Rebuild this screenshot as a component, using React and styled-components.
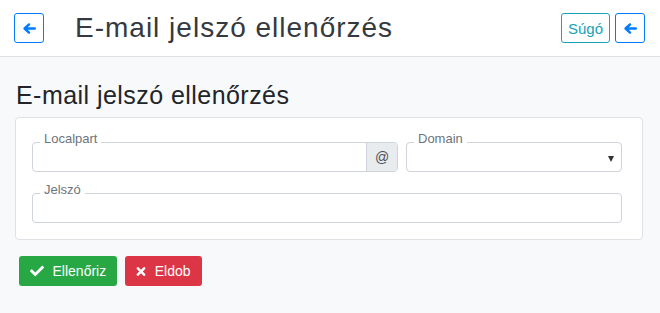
import React from 'react';
import styled, { createGlobalStyle } from 'styled-components';

const GlobalStyle = createGlobalStyle`
  html, body {
    margin: 0;
    padding: 0;
    background: #f8f9fa;
    font-family: "Liberation Sans", Arial, sans-serif;
    color: #212529;
  }
  * { box-sizing: border-box; }
`;

const ArrowLeft = ({ color }) => (
  <svg width="13" height="11" viewBox="0 0 13 11" fill="none" stroke={color} strokeWidth="2.4" strokeLinecap="round" strokeLinejoin="round">
    <path d="M11.8 5.5H2.2M6 1.4L1.6 5.5L6 9.6" />
  </svg>
);

const CheckIcon = () => (
  <svg width="14" height="14" viewBox="0 0 512 512" fill="#fff">
    <path d="M173.9 439.4l-166.4-166.4c-10-10-10-26.2 0-36.2l36.2-36.2c10-10 26.2-10 36.2 0L192 312.7 432.1 72.6c10-10 26.2-10 36.2 0l36.2 36.2c10 10 10 26.2 0 36.2l-294.4 294.4c-10 10-26.2 10-36.2 0z" />
  </svg>
);

const TimesIcon = () => (
  <svg width="10" height="13" viewBox="0 0 352 512" fill="#fff">
    <path d="M242.7 256l100.1-100.1c12.3-12.3 12.3-32.2 0-44.5l-22.2-22.2c-12.3-12.3-32.2-12.3-44.5 0L176 189.3 75.9 89.2c-12.3-12.3-32.2-12.3-44.5 0L9.2 111.5c-12.3 12.3-12.3 32.2 0 44.5L109.3 256 9.2 356.1c-12.3 12.3-12.3 32.2 0 44.5l22.2 22.2c12.3 12.3 32.2 12.3 44.5 0L176 322.7l100.1 100.1c12.3 12.3 32.2 12.3 44.5 0l22.2-22.2c12.3-12.3 12.3-32.2 0-44.5L242.7 256z" />
  </svg>
);

const Header = styled.header`
  height: 57px;
  background: #fff;
  border-bottom: 1px solid #dee2e6;
  display: flex;
  align-items: center;
  padding: 0 15px 0 14px;
`;

const HeaderTitle = styled.h1`
  flex: 1;
  margin: 0 0 0 31px;
  font-size: 28px;
  font-weight: 400;
  letter-spacing: 1px;
  color: #343a40;
`;

const OutlineButton = styled.button`
  height: 30px;
  min-width: 30px;
  padding: 0 ${p => (p.$text ? '6px' : '0')};
  margin-left: ${p => p.$gap || 0}px;
  background: #fff;
  border: 1px solid ${p => p.$color};
  color: ${p => p.$color};
  border-radius: 3px;
  font-family: inherit;
  font-size: 15px;
  display: flex;
  align-items: center;
  justify-content: center;
  cursor: pointer;
`;

const Main = styled.main`
  padding: 0 17px 0 15px;
`;

const PageTitle = styled.h2`
  margin: 0;
  padding: 24px 0 0 1px;
  height: 60px;
  font-size: 25px;
  font-weight: 400;
  letter-spacing: 0.45px;
  color: #212529;
`;

const Card = styled.section`
  background: #fff;
  border: 1px solid #dee2e6;
  border-radius: 4px;
  padding: 24px 20px 16px 16px;
  display: flex;
  flex-direction: column;
  gap: 21px;
`;

const Row = styled.div`
  display: grid;
  grid-template-columns: ${p => p.$cols || '1fr'};
  gap: 8px;
`;

const Field = styled.div`
  position: relative;
  height: 30px;
  border: 1px solid #ced4da;
  border-radius: 4px;
  background: #fff;
  display: flex;
`;

const FloatLabel = styled.label`
  position: absolute;
  top: -11px;
  left: 7px;
  padding: 0 4px;
  background: #fff;
  font-size: 13px;
  line-height: 13px;
  color: #6c757d;
`;

const Input = styled.input`
  flex: 1;
  min-width: 0;
  border: none;
  background: transparent;
  outline: none;
  border-radius: 4px;
  font-family: inherit;
  font-size: 14px;
  padding: 0 10px;
`;

const Addon = styled.span`
  width: 31px;
  background: #e9ecef;
  border-left: 1px solid #ced4da;
  border-radius: 0 3px 3px 0;
  color: #495057;
  font-size: 14px;
  display: flex;
  align-items: center;
  justify-content: center;
`;

const SelectCaret = styled.span`
  position: absolute;
  right: 7px;
  top: 13px;
  width: 0;
  height: 0;
  border-left: 3.5px solid transparent;
  border-right: 3.5px solid transparent;
  border-top: 6px solid #333;
  pointer-events: none;
`;

const Actions = styled.div`
  display: flex;
  gap: 8px;
  padding: 16px 0 0 4px;
`;

const SolidButton = styled.button`
  height: 30px;
  padding: 0 11px;
  border: none;
  border-radius: 3px;
  background: ${p => p.$bg};
  color: #fff;
  font-family: inherit;
  font-size: 14px;
  display: flex;
  align-items: center;
  gap: 8.5px;
  cursor: pointer;
`;

export default function App() {
  return (
    <>
      <GlobalStyle />
      <Header>
        <OutlineButton $color="#007bff" aria-label="Vissza">
          <ArrowLeft color="#007bff" />
        </OutlineButton>
        <HeaderTitle>E-mail jelszó ellenőrzés</HeaderTitle>
        <OutlineButton $color="#17a2b8" $text>Súgó</OutlineButton>
        <OutlineButton $color="#007bff" $gap={5} aria-label="Vissza">
          <ArrowLeft color="#007bff" />
        </OutlineButton>
      </Header>
      <Main>
        <PageTitle>E-mail jelszó ellenőrzés</PageTitle>
        <Card>
          <Row $cols="366fr 216fr">
            <Field>
              <FloatLabel>Localpart</FloatLabel>
              <Input type="text" />
              <Addon>@</Addon>
            </Field>
            <Field>
              <FloatLabel>Domain</FloatLabel>
              <Input as="div" />
              <SelectCaret />
            </Field>
          </Row>
          <Row>
            <Field>
              <FloatLabel>Jelszó</FloatLabel>
              <Input type="password" />
            </Field>
          </Row>
        </Card>
        <Actions>
          <SolidButton $bg="#28a745"><CheckIcon />Ellenőriz</SolidButton>
          <SolidButton $bg="#dc3545"><TimesIcon />Eldob</SolidButton>
        </Actions>
      </Main>
    </>
  );
}
